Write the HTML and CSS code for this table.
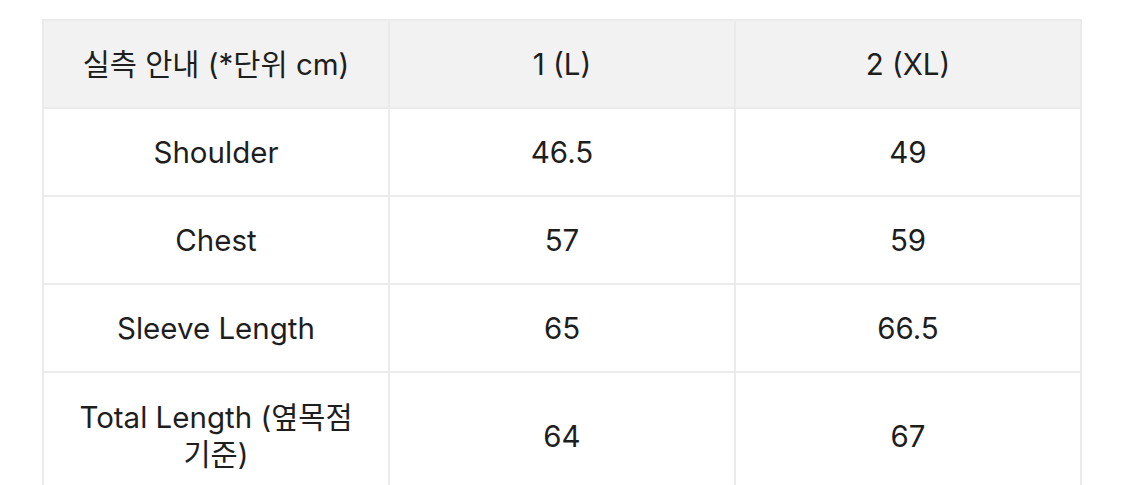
FILE: index.html
```html
<!DOCTYPE html>
<html lang="ko">
<head>
<meta charset="utf-8">
<link rel="stylesheet" href="styles.css">
</head>
<body>
<div class="wrap">
<table class="size-table">
  <thead>
    <tr>
      <th>실측 안내 (*단위 cm)</th>
      <th>1 (L)</th>
      <th>2 (XL)</th>
    </tr>
  </thead>
  <tbody>
    <tr><td>Shoulder</td><td>46.5</td><td>49</td></tr>
    <tr><td>Chest</td><td>57</td><td>59</td></tr>
    <tr><td>Sleeve Length</td><td>65</td><td>66.5</td></tr>
    <tr class="tall"><td>Total Length (옆목점<br>기준)</td><td>64</td><td>67</td></tr>
  </tbody>
</table>
</div>
</body>
</html>
```
FILE: styles.css
```css
html, body {
  margin: 0;
  padding: 0;
  background: #ffffff;
}
.wrap {
  padding: 19px 0 0 42px;
}
.size-table {
  border-collapse: collapse;
  table-layout: fixed;
  width: 1040px;
  font-family: Inter, "Noto Sans CJK KR", sans-serif;
  font-size: 29.5px;
  color: #1e1e1e;
}
.size-table th,
.size-table td {
  border: 2px solid #ebebeb;
  height: 86px;
  padding: 0 8px;
  text-align: center;
  vertical-align: middle;
  font-weight: 400;
  line-height: 37px;
}
.size-table th {
  background: #f2f2f2;
}
.size-table tr.tall td {
  height: 126px;
}
```
